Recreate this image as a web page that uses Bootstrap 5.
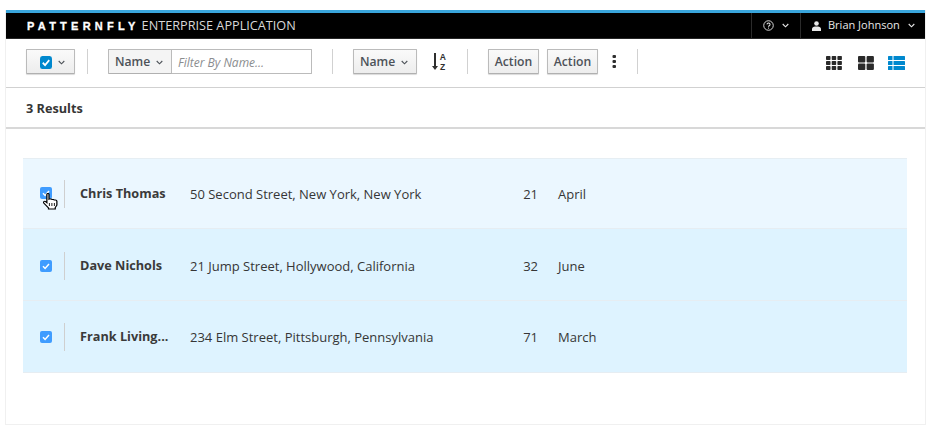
<!DOCTYPE html>
<html lang="en">
<head>
<meta charset="utf-8">
<title>PatternFly</title>
<link rel="stylesheet" href="https://cdn.jsdelivr.net/npm/bootstrap@5.3.0/dist/css/bootstrap.min.css">
<style>
html,body{height:100%;overflow:hidden;background:#fff}
body{font-family:"Open Sans","Liberation Sans",sans-serif;font-size:13px;color:#363636;padding:10px 15px 0 6px}
.pf-frame{height:415px;border:solid #f0f0f0;border-width:0 1px 1px 0;box-shadow:-1px 0 0 #f0f0f0;background:#fff}
.pf-mast{height:29px;background:#000;border-top:3px solid #39a5dc;border-bottom:1px solid #262626;color:#d1d1d1}
.pf-brand{padding-left:21px;font-size:12.7px;color:#d8d8d8;line-height:24px}
.pf-logo{font-family:"Liberation Sans",sans-serif;font-weight:700;font-size:11px;letter-spacing:4.25px;color:#fff;margin-right:2px;-webkit-text-stroke:.3px #fff}
.pf-mastitem{height:25px;border-left:1px solid #2b2b2b;font-size:11px;color:#e8e8e8}
.pf-help{width:49px;padding-left:11px}
.pf-user{width:125px;padding-left:11px}
.pf-user .pf-ava{margin-right:7px}
.pf-tools{height:49px;border-bottom:1px solid #d1d1d1;padding:10px 20px 0 20px}
.pf-btn{height:25px;border:1px solid #bbb;border-bottom-color:#b0b0b0;border-radius:1px;background:linear-gradient(#fafafa,#ededed);color:#4d5258;font-size:12.2px;font-weight:600;padding:1px 0 0;box-shadow:0 1px 1px rgba(0,0,0,.15)}
.pf-selbtn{padding-left:13px;gap:6px}
.pf-namebtn{padding-left:6px;gap:6px}
.pf-sep{width:1px;height:25px;background:#d1d1d1;flex:none}
.pf-sep-a{margin:0 20px 0 12px}
.pf-sep-b{margin:0 20px}
.pf-sep-c{margin-right:20px}
.pf-gap8{margin-left:8px}
.pf-w49{width:49px}.pf-w64{width:64px}.pf-w51{width:51px}
.pf-group{width:204px;height:25px}
.pf-group .pf-btn{width:64px;box-shadow:none;border-radius:1px 0 0 1px;background:#f4f4f4}
.pf-filter{flex:1;min-width:0;border:1px solid #bbb;border-left:0;border-radius:0 1px 1px 0;font-size:12px;font-style:italic;color:#8b8d8f;padding:1px 0 0 6px;line-height:23px}
.pf-sorticon{margin:3px 20px 0 15px;overflow:visible}
.pf-sorticon text{font-family:"Liberation Sans",sans-serif;font-weight:700;font-size:8.5px;fill:#2f2f2f}
.pf-kebab{margin:6px 21px 0 14px}
.pf-views{gap:16px;height:25px;padding-top:2px}
.pf-viewlist{margin-left:-2px}
.pf-count{height:41px;border-bottom:2px solid #d8d8d8;padding-left:20px;font-weight:700;font-size:12.7px;line-height:40px;color:#363636}
.pf-list{margin:29px 18px 0 17px;border-top:1px solid #e6eef3}
.pf-row{height:72px;background:#def3ff;border-bottom:1px solid #e6edf2;padding-left:17px;font-size:13px}
.pf-row:first-child{height:70px;background:#ebf7ff}
.pf-row:nth-child(2){padding-top:2px}
.pf-check{width:12px;height:12px;border-radius:2px;background:#3f9cff;flex:none}
.pf-up{margin-bottom:2px}
.pf-vline{width:1px;height:28px;background:#cfcfcf;margin:0 15px 0 12px;flex:none}
.pf-name{width:110px;font-weight:700;font-size:12.7px;color:#3a3a3a}
.pf-addr{width:328px;padding-top:2px}
.pf-num{width:20px;text-align:right;padding-top:2px}
.pf-month{margin-left:20px;padding-top:2px}
.pf-pointer{position:absolute;left:3px;top:6px}
.pf-cellbox{position:relative}
</style>
</head>
<body>
<div class="pf-frame">
  <header class="pf-mast d-flex align-items-center">
    <div class="pf-brand flex-grow-1"><span class="pf-logo">PATTERNFLY</span>ENTERPRISE APPLICATION</div>
    <div class="pf-mastitem pf-help d-flex align-items-center gap-2">
      <svg width="11" height="11" viewBox="0 0 12 12" fill="none" stroke="#e8e8e8"><circle cx="6" cy="6" r="5.2"/><path d="M4.300 4.800a1.700 1.500 0 1 1 2.500 1.400c-.6.3-.8.6-.8 1.100" stroke-width="1.100"/><path d="M6 8.300v1.100" stroke-width="1.100"/></svg>
      <svg width="7" height="5" viewBox="0 0 7 5" fill="none" stroke="#e8e8e8" stroke-width="1.100"><path d="M.7 1l2.800 2.800L6.300 1"/></svg>
    </div>
    <div class="pf-mastitem pf-user d-flex align-items-center">
      <svg class="pf-ava" width="9" height="10" viewBox="0 0 9 10" fill="#e8e8e8"><circle cx="4.500" cy="2.500" r="2.300"/><path d="M0 10V7.800C0 6.300 1.500 5.700 3 5.400h3c1.500.3 3 .9 3 2.400V10z"/></svg>
      <span>Brian Johnson</span>
      <svg class="ms-2" width="7" height="5" viewBox="0 0 7 5" fill="none" stroke="#e8e8e8" stroke-width="1.100"><path d="M.7 1l2.800 2.800L6.300 1"/></svg>
    </div>
  </header>

  <div class="pf-tools d-flex align-items-start">
    <button type="button" class="pf-btn pf-w49 pf-selbtn d-flex align-items-center">
      <svg width="12" height="13" viewBox="0 0 13 13" preserveAspectRatio="none"><rect width="13" height="13" rx="2.500" fill="#0088ce"/><path d="M3 6.700l2.500 2.400 4.500-5" fill="none" stroke="#fff" stroke-width="1.900"/></svg>
      <svg width="7" height="5" viewBox="0 0 7 5" fill="none" stroke="#4d5258" stroke-width="1.100"><path d="M.7 1l2.800 2.800L6.300 1"/></svg>
    </button>
    <span class="pf-sep pf-sep-a"></span>
    <div class="pf-group d-flex">
      <button type="button" class="pf-btn pf-namebtn d-flex align-items-center">Name
        <svg width="7" height="5" viewBox="0 0 7 5" fill="none" stroke="#4d5258" stroke-width="1.100"><path d="M.7 1l2.800 2.800L6.300 1"/></svg>
      </button>
      <div class="pf-filter">Filter By Name...</div>
    </div>
    <span class="pf-sep pf-sep-b"></span>
    <button type="button" class="pf-btn pf-w64 pf-namebtn d-flex align-items-center">Name
      <svg width="7" height="5" viewBox="0 0 7 5" fill="none" stroke="#4d5258" stroke-width="1.100"><path d="M.7 1l2.800 2.800L6.300 1"/></svg>
    </button>
    <svg class="pf-sorticon" width="15" height="20" viewBox="0 0 15 20"><path d="M3 1v13" stroke="#2f2f2f" stroke-width="2"/><path d="M0 14h6l-3 4z" fill="#2f2f2f"/><text x="7.800" y="8">A</text><text x="8" y="17.800">Z</text></svg>
    <span class="pf-sep pf-sep-c"></span>
    <button type="button" class="pf-btn pf-w51">Action</button>
    <button type="button" class="pf-btn pf-w51 pf-gap8">Action</button>
    <svg class="pf-kebab" width="4" height="13" viewBox="0 0 4 13" fill="#2f2f2f"><rect x=".5" width="3.500" height="3" rx="1"/><rect x=".5" y="5" width="3.500" height="3" rx="1"/><rect x=".5" y="10" width="3.500" height="3" rx="1"/></svg>
    <span class="pf-sep"></span>
    <div class="pf-views ms-auto d-flex align-items-center">
      <svg width="16" height="14" viewBox="0 0 16 14" fill="#2a2a2a"><rect width="4.500" height="4" rx=".7"/><rect x="5.700" width="4.500" height="4" rx=".7"/><rect x="11.400" width="4.500" height="4" rx=".7"/><rect y="5" width="4.500" height="4" rx=".7"/><rect x="5.700" y="5" width="4.500" height="4" rx=".7"/><rect x="11.400" y="5" width="4.500" height="4" rx=".7"/><rect y="10" width="4.500" height="4" rx=".7"/><rect x="5.700" y="10" width="4.500" height="4" rx=".7"/><rect x="11.400" y="10" width="4.500" height="4" rx=".7"/></svg>
      <svg width="16" height="14" viewBox="0 0 16 14" fill="#2a2a2a"><rect width="7.300" height="6.500" rx="1"/><rect x="8.600" width="7.300" height="6.500" rx="1"/><rect y="7.500" width="7.300" height="6.500" rx="1"/><rect x="8.600" y="7.500" width="7.300" height="6.500" rx="1"/></svg>
      <svg class="pf-viewlist" width="17" height="14" viewBox="0 0 17 14" fill="#0088ce"><rect width="4.500" height="4" rx=".5"/><rect x="5.500" width="11.500" height="4" rx=".5"/><rect y="5" width="4.500" height="4" rx=".5"/><rect x="5.500" y="5" width="11.500" height="4" rx=".5"/><rect y="10" width="4.500" height="4" rx=".5"/><rect x="5.500" y="10" width="11.500" height="4" rx=".5"/></svg>
    </div>
  </div>

  <div class="pf-count">3 Results</div>

  <div class="pf-list">
    <div class="pf-row d-flex align-items-center">
      <span class="pf-cellbox pf-up d-flex">
        <svg class="pf-check" viewBox="0 0 12 12"><path d="M3 6.200l2.100 2.200L9 4" fill="none" stroke="#fff" stroke-width="1.500"/></svg>
        <svg class="pf-pointer" width="15" height="17" viewBox="0.4 0 12 17" preserveAspectRatio="none"><path d="M3.500 1.200c0-1 1.700-1 1.700 0v5l.4-.3h1.300l.6.500h1.200l.6.500h1c.8 0 1.200.6 1.200 1.300v4l-1.300 2.400v1.400H4.800V15L1 10c-.7-1.200.7-2.200 1.500-1.300l1 1.100z" fill="#fff" stroke="#000" stroke-width="1"/><path d="M5.500 10v3M7.500 10v3M9.500 10v3" stroke="#000" stroke-width=".8"/></svg>
      </span>
      <span class="pf-vline"></span>
      <span class="pf-name">Chris Thomas</span>
      <span class="pf-addr">50 Second Street, New York, New York</span>
      <span class="pf-num">21</span>
      <span class="pf-month">April</span>
    </div>
    <div class="pf-row d-flex align-items-center">
      <svg class="pf-check" viewBox="0 0 12 12"><path d="M3 6.200l2.100 2.200L9 4" fill="none" stroke="#fff" stroke-width="1.500"/></svg>
      <span class="pf-vline"></span>
      <span class="pf-name">Dave Nichols</span>
      <span class="pf-addr">21 Jump Street, Hollywood, California</span>
      <span class="pf-num">32</span>
      <span class="pf-month">June</span>
    </div>
    <div class="pf-row d-flex align-items-center">
      <svg class="pf-check" viewBox="0 0 12 12"><path d="M3 6.200l2.100 2.200L9 4" fill="none" stroke="#fff" stroke-width="1.500"/></svg>
      <span class="pf-vline"></span>
      <span class="pf-name">Frank Living...</span>
      <span class="pf-addr">234 Elm Street, Pittsburgh, Pennsylvania</span>
      <span class="pf-num">71</span>
      <span class="pf-month">March</span>
    </div>
  </div>
</div>
<script src="https://cdn.jsdelivr.net/npm/bootstrap@5.3.0/dist/js/bootstrap.bundle.min.js"></script>
</body>
</html>
